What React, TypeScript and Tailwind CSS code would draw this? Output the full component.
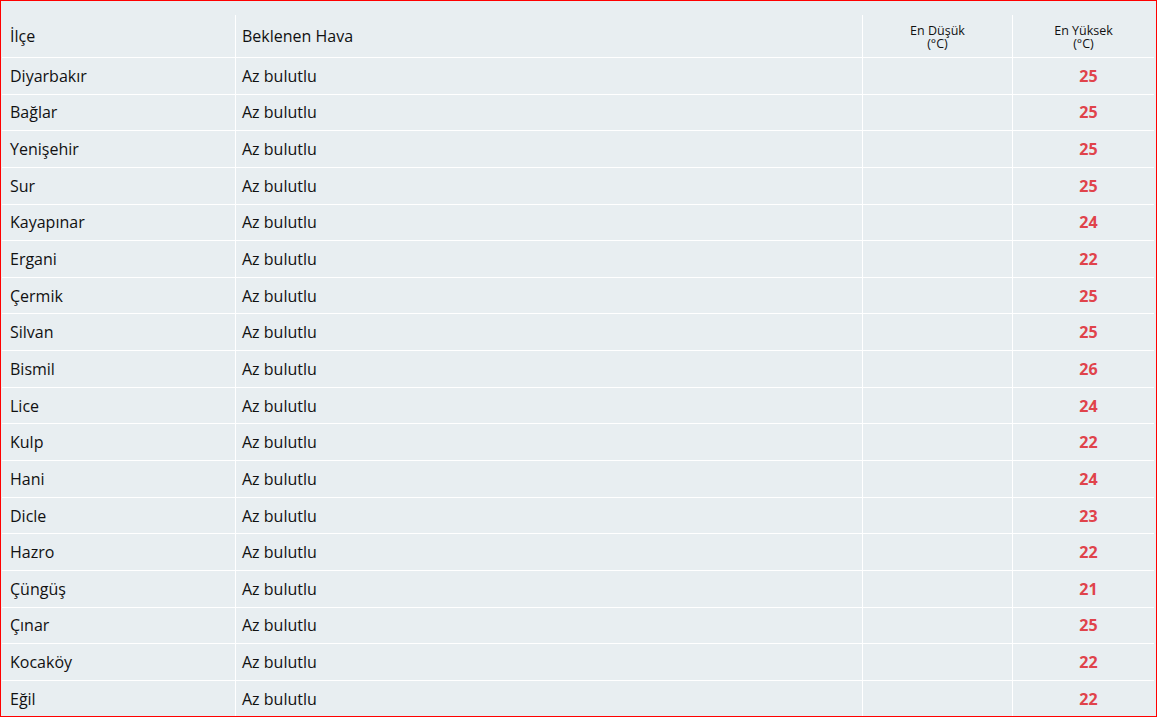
import React from "react";

const rows: [string, number][] = [
  ["Diyarbakır", 25],
  ["Bağlar", 25],
  ["Yenişehir", 25],
  ["Sur", 25],
  ["Kayapınar", 24],
  ["Ergani", 22],
  ["Çermik", 25],
  ["Silvan", 25],
  ["Bismil", 26],
  ["Lice", 24],
  ["Kulp", 22],
  ["Hani", 24],
  ["Dicle", 23],
  ["Hazro", 22],
  ["Çüngüş", 21],
  ["Çınar", 25],
  ["Kocaköy", 22],
  ["Eğil", 22],
];

const App = () => {
  return (
    <div
      className="w-[1157px] h-[717px] overflow-hidden border border-[#ff0000] bg-[#e8eef1] text-[#111]"
      style={{ fontFamily: '"Open Sans", "Noto Sans", sans-serif' }}
    >
      <div className="pt-[14px] pl-[1px] pr-[2px]">
        {/* Header */}
        <div className="flex h-[43px] border-b border-white">
          <div className="w-[233px] flex items-center pl-[8px] text-[16px]">İlçe</div>
          <div className="w-[627px] flex items-center pl-[6px] text-[16px] border-l border-white">
            Beklenen Hava
          </div>
          <div className="w-[150px] flex flex-col items-center justify-center text-[12.5px] leading-[13px] border-l border-white pt-[1px]">
            <span>En Düşük</span>
            <span>(°C)</span>
          </div>
          <div className="flex-1 flex flex-col items-center justify-center text-[12.5px] leading-[13px] border-l border-white pt-[1px]">
            <span>En Yüksek</span>
            <span>(°C)</span>
          </div>
        </div>

        {/* Rows */}
        {rows.map(([name, max]) => (
          <div key={name} className="flex h-[36.65px] border-b border-white text-[16px]">
            <div className="w-[233px] flex items-center pl-[8px]">{name}</div>
            <div className="w-[627px] flex items-center pl-[6px] border-l border-white">Az bulutlu</div>
            <div className="w-[150px] border-l border-white"></div>
            <div className="flex-1 flex items-center justify-center pl-[10px] border-l border-white font-bold text-[#e0434b]">
              {max}
            </div>
          </div>
        ))}
      </div>
    </div>
  );
};

export default App;
